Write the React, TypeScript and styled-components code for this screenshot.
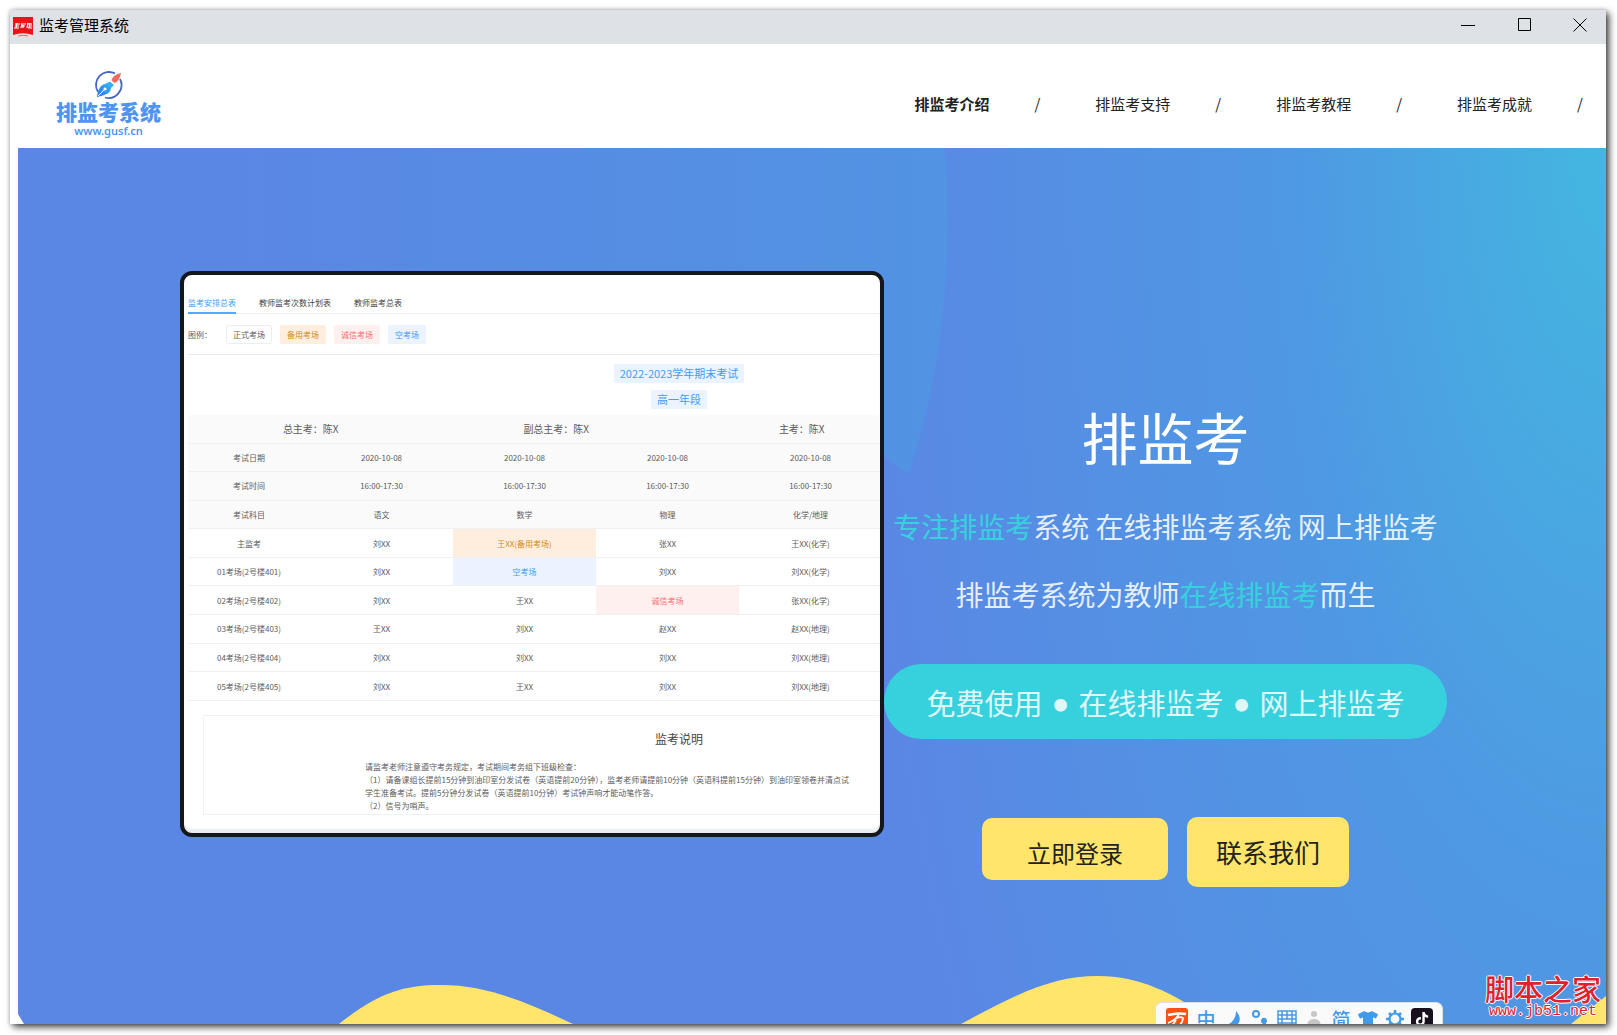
import React from "react";
import styled, { createGlobalStyle, css } from "styled-components";
import { FaTshirt } from "react-icons/fa";
import { FaTiktok } from "react-icons/fa6";

const GlobalStyle = createGlobalStyle`
  * { box-sizing: border-box; }
  body {
    margin: 0;
    background: #fff;
    font-family: "Noto Sans CJK SC", "Noto Sans", sans-serif;
    color: #222;
  }
  button { font: inherit; border: 0; padding: 0; background: none; cursor: pointer; }
  a { color: inherit; text-decoration: none; }
  h1, h2, p, ul { margin: 0; padding: 0; }
`;

const Page = styled.div`
  display: flex;
  min-height: 100vh;
  padding: 10px 11px 11px 10px;
`;

const Window = styled.div`
  display: flex;
  flex: 1;
  flex-direction: column;
  min-width: 0;
  background: #fff;
  box-shadow: 3px 3px 7px rgba(0, 0, 0, 0.75), 0 0 4px rgba(0, 0, 0, 0.2);
`;

/* Title bar */

const TitleBar = styled.header`
  display: flex;
  align-items: center;
  gap: 6px;
  height: 34px;
  padding-left: 3px;
  background: #dee1e6;
  color: #000;
`;

const WindowTitle = styled.span`
  flex: 1;
  height: 32px;
  font-size: 15px;
  line-height: 28px;
`;

const WindowControls = styled.div`
  display: flex;
  align-self: flex-start;
`;

const ControlButton = styled.button`
  display: grid;
  place-items: center;
  width: 57px;
  height: 30px;

  &:last-child { width: 53px; }
`;

/* Site header */

const SiteHeader = styled.div`
  display: flex;
  justify-content: space-between;
  align-items: flex-start;
  height: 104px;
  padding: 26px 23px 0 46px;
`;

const Brand = styled.a`
  display: flex;
  flex-direction: column;
  align-items: center;
  color: #4f94f3;
`;

const BrandName = styled.span`
  font-size: 21px;
  font-weight: 900;
  line-height: 22px;
`;

const BrandUrl = styled.span`
  font-family: "Noto Sans", sans-serif;
  font-size: 11px;
  font-weight: 600;
  line-height: 18px;
`;

const NavList = styled.ul`
  display: flex;
  gap: 55px;
  padding-top: 22px;
  list-style: none;
`;

const NavItem = styled.li<{ $active?: boolean }>`
  display: flex;
  gap: 45px;
  font-size: 15px;
  line-height: 24px;
  a { font-weight: ${(p) => (p.$active ? 700 : 400)}; }
`;

/* Hero */

const Hero = styled.main`
  position: relative;
  flex: 1;
  margin-left: 8px;
  overflow: hidden;
  background: radial-gradient(
    ellipse 760px 1800px at 100% 0,
    #43b7e0 0,
    #4f98e3 42%,
    #5a87e4 100%
  );
`;

const Scenery = styled.svg`
  position: absolute;
  inset: 0;
  width: 100%;
  height: 100%;
`;

const HeroBody = styled.div`
  position: relative;
  display: grid;
  grid-template-columns: 5fr 4fr;
  align-items: start;
  padding: 123px 159px 0 162px;
`;

const Device = styled.section`
  min-width: 0;
  overflow: hidden;
  padding: 19px 0 18px 4px;
  border: 4px solid #14171c;
  border-radius: 12px;
  background: #fff;
  box-shadow: inset 0 -4px 2px #e9edf1;
  color: #5c5c5c;
  font-size: 8px;
`;

const Sheet = styled.div`
  width: 982px;
`;

const Tabs = styled.div`
  display: flex;
  gap: 23px;
  border-bottom: 1px solid #eceef1;
`;

const Tab = styled.button<{ $active?: boolean }>`
  height: 20px;
  margin-bottom: -1px;
  border-bottom: 2px solid transparent;
  color: #444;
  line-height: 16px;
  ${(p) => p.$active && css`
    border-bottom-color: #55a9ff;
    color: #409eff;
  `}
`;

const Legend = styled.div`
  display: flex;
  gap: 8px;
  align-items: center;
  padding: 11px 0 10px;
  border-bottom: 1px solid #e6e9ee;
`;

const LegendLabel = styled.span`
  width: 30px;
`;

type Tone = "plain" | "spare" | "honest" | "empty";

const toneStyles = {
  plain: css``,
  spare: css`background: #ffeedd; color: #cf8a1d;`,
  honest: css`background: #fff0f0; color: #f96e70;`,
  empty: css`background: #eaf3ff; color: #409eff;`,
};

const Tag = styled.span<{ $tone: Tone }>`
  height: 19px;
  padding: 0 6px;
  border: 1px solid ${(p) => (p.$tone === "plain" ? "#eceef1" : "transparent")};
  border-radius: 2px;
  line-height: 17px;
  ${(p) => toneStyles[p.$tone]}
`;

const ExamTitles = styled.div`
  display: flex;
  flex-direction: column;
  align-items: center;
  gap: 7px;
  margin-top: 9px;
  padding-bottom: 6px;
`;

const ExamTitle = styled.h2`
  padding: 0 6px;
  background: #eaf3ff;
  color: #409eff;
  font-size: 11px;
  font-weight: 400;
  line-height: 19px;
`;

const Chiefs = styled.div`
  display: grid;
  grid-template-columns: repeat(4, 1fr);
  border-bottom: 1px solid #eff0f2;
  background: #fafafa;
  font-size: 10px;
  line-height: 28px;
  text-align: center;
`;

const Schedule = styled.table`
  width: 694px;
  height: 257px;
  border-collapse: collapse;
  table-layout: fixed;
  text-align: center;
`;

const HeadRow = styled.tr`
  background: #fafafa;
`;

const LabelCell = styled.th`
  width: 122px;
  padding: 0;
  border-bottom: 1px solid #eff0f2;
  font-weight: 400;
`;

const Cell = styled.td<{ $tone?: Tone }>`
  padding: 0;
  border-bottom: 1px solid #eff0f2;
  ${(p) => toneStyles[p.$tone ?? "plain"]}
`;

const Notes = styled.div`
  margin: 14px 15px 0;
  padding: 14px 0 2px 161px;
  border: 1px solid #f0f1f3;
  line-height: 13px;
  white-space: nowrap;
`;

const NotesTitle = styled.h2`
  margin: 0 0 12px -161px;
  color: #444;
  font-size: 12px;
  font-weight: 400;
  line-height: 18px;
  text-align: center;
`;

/* Pitch */

const Pitch = styled.section`
  padding-top: 125px;
  color: rgba(255, 255, 255, 0.87);
  text-align: center;
  white-space: nowrap;
`;

const PitchTitle = styled.h1`
  margin-bottom: 16px;
  color: #fff;
  font-size: 56px;
  font-weight: 400;
  line-height: 80px;
`;

const PitchLine = styled.p`
  font-size: 28px;
  line-height: 68px;
`;

const Accent = styled.span`
  color: #37d1de;
`;

const Banner = styled.p`
  display: flex;
  justify-content: center;
  height: 75px;
  margin-top: 36px;
  border-radius: 38px;
  background: #37d1de;
  font-size: 29px;
  line-height: 77px;
`;

const Dot = styled.span`
  width: 36px;
  font-size: 14px;
  line-height: 80px;
`;

const Actions = styled.div`
  display: flex;
  justify-content: center;
  align-items: baseline;
  gap: 19px;
  margin-top: 78px;
`;

const ActionButton = styled.button<{ $large?: boolean }>`
  border-radius: 10px;
  background: #ffe56b;
  color: #222;
  ${(p) => p.$large
    ? css`padding: 15px 29px; font-size: 26px; line-height: 40px;`
    : css`padding: 15px 45px 7px; font-size: 24px; line-height: 40px;`}
`;

/* Overlays */

const InputBar = styled.div`
  position: absolute;
  right: 163px;
  bottom: 0;
  display: flex;
  align-items: flex-start;
  gap: 5px;
  height: 22px;
  padding: 5px 9px 0 10px;
  overflow: hidden;
  border: 1px solid #dcdfe6;
  border-bottom: 0;
  border-radius: 7px 7px 0 0;
  background: #fafafa;
  color: #429be8;
`;

const InputKey = styled.button`
  display: grid;
  place-items: center;
  width: 22px;
  height: 22px;
  color: inherit;
  font-size: 19px;
  font-weight: 500;
  line-height: 22px;
`;

const BrandKey = styled(InputKey)`
  width: 24px;
  justify-items: start;
`;

const TikTokKey = styled(InputKey)`
  border-radius: 4px;
  background: #17101c;
  color: #fff;
`;

const Watermark = styled.a`
  position: absolute;
  right: 5px;
  bottom: 4px;
  display: flex;
  flex-direction: column;
  align-items: center;
  color: #e0202c;
  font-size: 29px;
  font-weight: 500;
  line-height: 32px;
  text-shadow: 1px 0 #fff, -1px 0 #fff, 0 1px #fff, 0 -1px #fff;
`;

const WatermarkUrl = styled.span`
  font-family: "Liberation Mono", monospace;
  font-size: 15px;
  line-height: 16px;
`;

const rows: { label: string; cells: (string | [string, Tone])[]; head?: boolean }[] = [
  { label: "考试日期", cells: ["2020-10-08", "2020-10-08", "2020-10-08", "2020-10-08"], head: true },
  { label: "考试时间", cells: ["16:00-17:30", "16:00-17:30", "16:00-17:30", "16:00-17:30"], head: true },
  { label: "考试科目", cells: ["语文", "数学", "物理", "化学/地理"], head: true },
  { label: "主监考", cells: ["刘XX", ["王XX(备用考场)", "spare"], "张XX", "王XX(化学)"] },
  { label: "01考场(2号楼401)", cells: ["刘XX", ["空考场", "empty"], "刘XX", "刘XX(化学)"] },
  { label: "02考场(2号楼402)", cells: ["刘XX", "王XX", ["诚信考场", "honest"], "张XX(化学)"] },
  { label: "03考场(2号楼403)", cells: ["王XX", "刘XX", "赵XX", "赵XX(地理)"] },
  { label: "04考场(2号楼404)", cells: ["刘XX", "刘XX", "刘XX", "刘XX(地理)"] },
  { label: "05考场(2号楼405)", cells: ["刘XX", "王XX", "刘XX", "刘XX(地理)"] },
];

const navItems = ["排监考介绍", "排监考支持", "排监考教程", "排监考成就"];

const AppIcon = () => (
  <svg width="20" height="20" viewBox="0 0 20 20" aria-hidden="true">
    <rect width="20" height="20" fill="#e81419" />
    <path d="M0 18Q10 14.500 20 18V20H0Z" fill="#f6dcdf" />
    <path d="M5 19Q10 17.500 15 19" stroke="#e86a6e" fill="none" />
    <g stroke="#fff" strokeWidth="1.200" fill="none">
      <path d="M2 7h5M4 6L3 11M2 9h4M1 11h5M8 7h5M9 7L8 11M9 9h3M10 8v3M14 7h5M15 6l-1 5M17 6l-1 5M16 9h3M15 11h4" />
    </g>
  </svg>
);

const BrandMark = () => (
  <svg width="30" height="30" viewBox="0 0 30 30" aria-hidden="true">
    <defs>
      <linearGradient id="nib" x1="1" y1="0" x2="0" y2="1">
        <stop offset="0" stopColor="#35c4f4" />
        <stop offset="1" stopColor="#2f6fe8" />
      </linearGradient>
    </defs>
    <path d="M21 3.500A13 13 0 0 0 4 22" fill="none" stroke="#4766c4" strokeWidth="1.800" />
    <path d="M26 9A13 13 0 0 1 11 27.500" fill="none" stroke="#4766c4" strokeWidth="1.800" />
    <path d="M27 3C22 4 18 7 17.500 10.500L20.500 13C24 12 26 8 27 3Z" fill="#f46a5c" />
    <path d="M16 11.500L20 15L17 18C17 23 12 25 3 27C4 20 6 15 11 14Z" fill="url(#nib)" />
    <path d="M4 26L10 20" stroke="#fff" strokeWidth="1" />
    <circle cx="11" cy="19" r="1.500" fill="#fff" />
  </svg>
);

const App = () => (
  <>
    <GlobalStyle />
    <Page>
      <Window>
        <TitleBar>
          <AppIcon />
          <WindowTitle>监考管理系统</WindowTitle>
          <WindowControls>
            <ControlButton aria-label="最小化">
              <svg width="14" height="14" viewBox="0 0 14 14" stroke="#000"><path d="M0 7.500H14" /></svg>
            </ControlButton>
            <ControlButton aria-label="最大化">
              <svg width="14" height="14" viewBox="0 0 14 14" stroke="#000" fill="none"><path d="M.5.500H12.500V12.500H.5Z" /></svg>
            </ControlButton>
            <ControlButton aria-label="关闭">
              <svg width="14" height="14" viewBox="0 0 14 14" stroke="#000"><path d="M.5.500L13.500 13.500M13.500.500L.5 13.500" /></svg>
            </ControlButton>
          </WindowControls>
        </TitleBar>

        <SiteHeader>
          <Brand href="#">
            <BrandMark />
            <BrandName>排监考系统</BrandName>
            <BrandUrl>www.gusf.cn</BrandUrl>
          </Brand>
          <nav>
            <NavList>
              {navItems.map((item, i) => (
                <NavItem key={item} $active={i === 0}>
                  <a href="#">{item}</a>
                  <span>/</span>
                </NavItem>
              ))}
            </NavList>
          </nav>
        </SiteHeader>

        <Hero>
          <Scenery viewBox="0 0 1588 876" preserveAspectRatio="none" aria-hidden="true">
            <defs>
              <linearGradient id="disc" x1="0" y1="0" x2="1" y2="0">
                <stop offset="0" stopColor="#5293e3" stopOpacity="0" />
                <stop offset="1" stopColor="#5293e3" />
              </linearGradient>
            </defs>
            <path d="M200 0H927Q940 180 890 326Q870 312 840 290L200 290Z" fill="url(#disc)" />
            <g fill="#ffe56b">
              <path d="M321 876C360 845 385 837 423 837C470 837 510 855 555 876Z" />
              <path d="M943 876C1000 845 1035 828 1080 828C1125 828 1160 848 1200 876Z" />
              <path d="M1553 876L1588 848V876Z" />
            </g>
            <path d="M0 866L6 876H0Z" fill="#fff" />
          </Scenery>

          <HeroBody>
            <Device>
              <Sheet>
                <Tabs>
                  <Tab $active>监考安排总表</Tab>
                  <Tab>教师监考次数计划表</Tab>
                  <Tab>教师监考总表</Tab>
                </Tabs>
                <Legend>
                  <LegendLabel>图例：</LegendLabel>
                  <Tag $tone="plain">正式考场</Tag>
                  <Tag $tone="spare">备用考场</Tag>
                  <Tag $tone="honest">诚信考场</Tag>
                  <Tag $tone="empty">空考场</Tag>
                </Legend>
                <ExamTitles>
                  <ExamTitle>2022-2023学年期末考试</ExamTitle>
                  <ExamTitle>高一年段</ExamTitle>
                </ExamTitles>
                <Chiefs>
                  <span>总主考：陈X</span>
                  <span>副总主考：陈X</span>
                  <span>主考：陈X</span>
                </Chiefs>
                <Schedule>
                  <tbody>
                    {rows.map((row) => {
                      const Row = row.head ? HeadRow : "tr";
                      return (
                        <Row key={row.label}>
                          <LabelCell scope="row">{row.label}</LabelCell>
                          {row.cells.map((cell, i) =>
                            typeof cell === "string"
                              ? <Cell key={i}>{cell}</Cell>
                              : <Cell key={i} $tone={cell[1]}>{cell[0]}</Cell>
                          )}
                        </Row>
                      );
                    })}
                  </tbody>
                </Schedule>
                <Notes>
                  <NotesTitle>监考说明</NotesTitle>
                  <p>请监考老师注意遵守考务规定，考试期间考务组下班级检查：</p>
                  <p>（1）请备课组长提前15分钟到油印室分发试卷（英语提前20分钟），监考老师请提前10分钟（英语科提前15分钟）到油印室领卷并清点试</p>
                  <p>学生准备考试。提前5分钟分发试卷（英语提前10分钟）考试钟声响才能动笔作答。</p>
                  <p>（2）信号为哨声。</p>
                </Notes>
              </Sheet>
            </Device>

            <Pitch>
              <PitchTitle>排监考</PitchTitle>
              <PitchLine><Accent>专注排监考</Accent>系统 在线排监考系统 网上排监考</PitchLine>
              <PitchLine>排监考系统为教师<Accent>在线排监考</Accent>而生</PitchLine>
              <Banner>
                <span>免费使用</span><Dot>●</Dot><span>在线排监考</span><Dot>●</Dot><span>网上排监考</span>
              </Banner>
              <Actions>
                <ActionButton>立即登录</ActionButton>
                <ActionButton $large>联系我们</ActionButton>
              </Actions>
            </Pitch>
          </HeroBody>

          <InputBar>
            <BrandKey aria-label="输入法">
              <svg width="22" height="22" viewBox="0 0 22 22">
                <rect width="22" height="22" rx="3" fill="#ff4f12" />
                <path d="M2 7Q11 4.500 20 6" stroke="#fff" strokeWidth="2.400" fill="none" />
                <path d="M13 6Q10 12 2 15M9 11Q14 8 17 10Q17 14 13 18M10 12L6 18" stroke="#fff" strokeWidth="1.800" fill="none" />
              </svg>
            </BrandKey>
            <InputKey>中</InputKey>
            <InputKey aria-label="月亮">
              <svg width="20" height="20" viewBox="0 0 20 20"><path d="M13 2C18 7 18 13 13 17C9 20 3 19 1 16C8 16 13 10 13 2Z" fill="currentColor" /></svg>
            </InputKey>
            <InputKey aria-label="标点">
              <svg width="18" height="20" viewBox="0 0 18 20"><circle cx="5" cy="5" r="3" fill="none" stroke="currentColor" strokeWidth="2" /><path d="M10 12a3 3 0 1 1 5 2q0 3-4 5q2-3 1-4q-2-1-2-3Z" fill="currentColor" /></svg>
            </InputKey>
            <InputKey aria-label="键盘">
              <svg width="20" height="18" viewBox="0 0 20 18" fill="none" stroke="currentColor" strokeWidth="1.500"><path d="M1 1H19V17H1ZM1 5H19M1 9H19M5 1V9M10 1V9M15 1V9M1 13H19M5 9V17M15 9V17" /></svg>
            </InputKey>
            <InputKey aria-label="用户">
              <svg width="18" height="20" viewBox="0 0 18 20" fill="#c6c6c6"><circle cx="9" cy="5" r="3" /><path d="M2 18Q2 10 9 10T16 18Z" /></svg>
            </InputKey>
            <InputKey>简</InputKey>
            <InputKey aria-label="皮肤"><FaTshirt size={20} /></InputKey>
            <InputKey aria-label="设置">
              <svg width="20" height="20" viewBox="0 0 20 20" fill="none" stroke="currentColor">
                <circle cx="10" cy="10" r="5.500" strokeWidth="2.200" />
                <path d="M10 1v3M10 16v3M1 10h3M16 10h3M4 4l2 2M14 14l2 2M4 16l2-2M14 6l2-2" strokeWidth="2.600" />
              </svg>
            </InputKey>
            <TikTokKey aria-label="抖音"><FaTiktok size={14} /></TikTokKey>
          </InputBar>

          <Watermark href="#">
            脚本之家
            <WatermarkUrl>www.jb51.net</WatermarkUrl>
          </Watermark>
        </Hero>
      </Window>
    </Page>
  </>
);

export default App;
